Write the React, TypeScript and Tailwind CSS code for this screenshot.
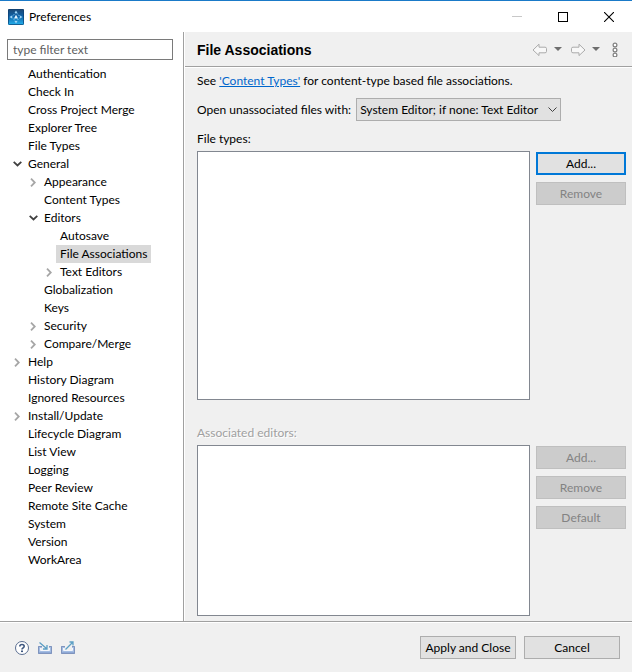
import { useState } from "react";
import type { ReactNode } from "react";
import clsx from "clsx";

type PageNode = {
  title: string;
  open?: boolean;
  children?: PageNode[];
};

const pages: PageNode[] = [
  { title: "Authentication" },
  { title: "Check In" },
  { title: "Cross Project Merge" },
  { title: "Explorer Tree" },
  { title: "File Types" },
  {
    title: "General",
    open: true,
    children: [
      { title: "Appearance", children: [] },
      { title: "Content Types" },
      {
        title: "Editors",
        open: true,
        children: [
          { title: "Autosave" },
          { title: "File Associations" },
          { title: "Text Editors", children: [] },
        ],
      },
      { title: "Globalization" },
      { title: "Keys" },
      { title: "Security", children: [] },
      { title: "Compare/Merge", children: [] },
    ],
  },
  { title: "Help", children: [] },
  { title: "History Diagram" },
  { title: "Ignored Resources" },
  { title: "Install/Update", children: [] },
  { title: "Lifecycle Diagram" },
  { title: "List View" },
  { title: "Logging" },
  { title: "Peer Review" },
  { title: "Remote Site Cache" },
  { title: "System" },
  { title: "Version" },
  { title: "WorkArea" },
];

const AppIcon = () => (
  <svg width="16" height="16" viewBox="0 0 16 16" aria-hidden="true">
    <defs>
      <linearGradient id="app-bg" x1="0" y1="0" x2="0" y2="1">
        <stop offset="0" stopColor="#1d4672" />
        <stop offset="0.45" stopColor="#0f62a8" />
        <stop offset="1" stopColor="#25b4f0" />
      </linearGradient>
    </defs>
    <rect width="16" height="16" rx="1" fill="url(#app-bg)" />
    <rect x="0.5" y="0.5" width="15" height="15" rx="1" fill="none" stroke="#0d3f70" strokeOpacity="0.7" />
    <path d="M8 3.5 12.5 8 8 12.5 3.5 8Z" fill="none" stroke="#7fc4f2" strokeDasharray="2 1" />
    <path d="M8 1.5 9.5 4h-3ZM8 14.5 6.5 12h3ZM1.5 8 4 6.5v3ZM14.5 8 12 9.5v-3Z" fill="#9fd6f8" />
    <path d="M8 5.8 10 9.5H6Z" fill="#e8f6ff" />
  </svg>
);

const Chevron = ({ open }: { open?: boolean }) =>
  open ? (
    <svg width="9" height="6" viewBox="0 0 9 6" fill="none" stroke="#404040" strokeWidth="1.8">
      <path d="M0.7 0.8 4.5 4.4 8.3 0.8" />
    </svg>
  ) : (
    <svg width="6" height="10" viewBox="0 0 6 10" fill="none" stroke="#a6a6a6" strokeWidth="1.8">
      <path d="M1 1.7 4.8 5.5 1 9.3" />
    </svg>
  );

const Arrow = ({ flip }: { flip?: boolean }) => (
  <svg width="16" height="14" viewBox="0 0 16 14" className={clsx(flip && "-scale-x-100")}>
    <path
      d="M1 8 7 2.2V5.2H13Q14.5 5.2 14.5 6.6V9.4Q14.5 10.8 13 10.8H7V13.6Z"
      fill="#f8f8f8"
      stroke="#ababab"
      strokeLinejoin="round"
    />
  </svg>
);

const Triangle = () => (
  <svg width="8" height="4" viewBox="0 0 8 4">
    <path d="M0 0H8L4 4Z" fill="#6e6e6e" />
  </svg>
);

const HelpIcon = () => (
  <svg width="16" height="16" viewBox="0 0 16 16" fill="none">
    <circle cx="8" cy="8" r="6.5" fill="#fff" stroke="#5a6e91" />
    <path d="M5.8 6.4Q5.8 4.5 8 4.5T10.2 6.3Q10.2 7.3 9 8 8 8.5 8 9.6" stroke="#3f5880" strokeWidth="1.6" />
    <rect x="7" y="10.5" width="2" height="1.6" fill="#3f5880" />
  </svg>
);

const TrayIcon = ({ out }: { out?: boolean }) => (
  <svg width="16" height="16" viewBox="0 0 16 16" fill="none">
    <path d="M1 6H5V8H3V10H13V8H12V6H15V14H1Z" fill="#a3bce2" />
    <path d="M5 6.5H1.5V13.5H14.5V6.5H12" stroke="#8094bd" />
    <path d="M2 12.5H14" stroke="#8fa9d6" />
    <path d="M3.5 8V10.5H12.5V8" stroke="#f4f7fc" />
    {out ? (
      <path d="M5.5 9.5 12.5 2.5M9.5 2H13V5.5" stroke="#5c9fc4" strokeWidth="1.3" />
    ) : (
      <path d="M2.5 2.5 9.5 8.5M10 5V9H6" stroke="#5c9fc4" strokeWidth="1.3" />
    )}
  </svg>
);

type ButtonProps = {
  children: ReactNode;
  disabled?: boolean;
  focused?: boolean;
  className?: string;
};

const Button = ({ children, disabled, focused, className }: ButtonProps) => (
  <button
    type="button"
    disabled={disabled}
    className={clsx(
      "flex h-[23px] shrink-0 items-center justify-center whitespace-nowrap",
      focused ? "border-2 border-[#0078d7]" : "border",
      disabled
        ? "border-[#bfbfbf] bg-[#cccccc] text-[#838383]"
        : "bg-[#e1e1e1]",
      !disabled && !focused && "border-[#adadad]",
      className,
    )}
  >
    {children}
  </button>
);

type TreeProps = {
  nodes: PageNode[];
  selected: string;
  onSelect: (title: string) => void;
  nested?: boolean;
};

const Tree = ({ nodes, selected, onSelect, nested }: TreeProps) => (
  <ul role={nested ? "group" : "tree"} className={clsx(nested && "pl-4")}>
    {nodes.map((node) => (
      <li
        key={node.title}
        role="treeitem"
        aria-selected={node.title === selected}
        aria-expanded={node.children ? !!node.open : undefined}
      >
        <div className="flex h-[18px] items-center">
          <span className="flex w-3.5 shrink-0 justify-center">
            {node.children && <Chevron open={node.open} />}
          </span>
          <button
            type="button"
            onClick={() => onSelect(node.title)}
            className={clsx(
              "h-full px-1 whitespace-nowrap",
              node.title === selected && "bg-[#d9d9d9]",
            )}
          >
            {node.title}
          </button>
        </div>
        {node.open && node.children && (
          <Tree nodes={node.children} selected={selected} onSelect={onSelect} nested />
        )}
      </li>
    ))}
  </ul>
);

const TitleBar = () => (
  <div className="flex h-8 items-center border-t border-[#1a7ac8] bg-white pl-2">
    <AppIcon />
    <h1 className="ml-[5px] flex-1">Preferences</h1>
    <button type="button" aria-label="Minimize" disabled className="flex h-full w-[46px] items-center justify-center">
      <svg width="11" height="11" viewBox="0 0 11 11" stroke="#c8c8c8">
        <path d="M0 5.5H10" />
      </svg>
    </button>
    <button type="button" aria-label="Maximize" className="flex h-full w-[46px] items-center justify-center">
      <svg width="10" height="10" viewBox="0 0 10 10" fill="none" stroke="#000">
        <rect x="0.5" y="0.5" width="9" height="9" />
      </svg>
    </button>
    <button type="button" aria-label="Close" className="flex h-full w-[46px] items-center justify-center">
      <svg width="10" height="10" viewBox="0 0 10 10" stroke="#000" strokeWidth="1.1">
        <path d="M0 0 10 10M10 0 0 10" />
      </svg>
    </button>
  </div>
);

const PageHeader = ({ title }: { title: string }) => (
  <div className="flex h-[35px] shrink-0 items-center border-b border-[#a0a0a0] pr-3.5 pl-3">
    <h2 className="flex-1 pt-0.5 font-['Liberation_Sans',sans-serif] text-[14px] font-bold">{title}</h2>
    <button type="button" aria-label="Back">
      <Arrow />
    </button>
    <button type="button" aria-label="Back history" className="ml-1.5">
      <Triangle />
    </button>
    <button type="button" aria-label="Forward" className="ml-2">
      <Arrow flip />
    </button>
    <button type="button" aria-label="Forward history" className="ml-1.5">
      <Triangle />
    </button>
    <button type="button" aria-label="Menu" className="ml-3">
      <svg width="6" height="16" viewBox="0 0 6 16" fill="#fff" stroke="#808080" strokeWidth="1.2">
        <circle cx="3" cy="4" r="1.9" />
        <circle cx="3" cy="9" r="1.9" />
        <circle cx="3" cy="14" r="1.9" />
      </svg>
    </button>
  </div>
);

export default function App() {
  const [selected, setSelected] = useState("File Associations");

  return (
    <div className="flex min-h-screen flex-col bg-[#f0f0f0] font-['Lato','Open_Sans',sans-serif] text-[12px] leading-[18px] text-black">
      <TitleBar />

      <div className="flex flex-1 border-b border-[#a0a0a0]">
        <div className="w-[184px] shrink-0 border-r border-[#a0a0a0] bg-white pt-[7px]">
          <input
            type="text"
            aria-label="Filter"
            placeholder="type filter text"
            className="mr-2.5 ml-[7px] block h-[21px] w-[166px] border border-[#7a7a7a] px-[5px] placeholder:text-[#606060]"
          />
          <nav aria-label="Preference pages" className="pt-[5px] pl-2.5">
            <Tree nodes={pages} selected={selected} onSelect={setSelected} />
          </nav>
        </div>

        <main className="flex min-w-0 flex-1 flex-col border-l border-white">
          <PageHeader title="File Associations" />

          <div className="flex flex-1 flex-col border-t border-white pr-1.5 pb-[5px] pl-3">
            <p className="mt-1">
              See{" "}
              <a href="#content-types" className="text-[#0066cc] underline">
                'Content Types'
              </a>{" "}
              for content-type based file associations.
            </p>

            <div className="mt-2 flex items-center gap-[5px]">
              <label htmlFor="opener">Open unassociated files with:</label>
              <div className="relative">
                <select
                  id="opener"
                  className="block h-[23px] w-[205px] appearance-none border border-[#adadad] bg-[#e1e1e1] pr-4 pl-[3px]"
                >
                  <option>System Editor; if none: Text Editor</option>
                </select>
                <svg
                  width="9"
                  height="6"
                  viewBox="0 0 9 6"
                  fill="none"
                  stroke="#404040"
                  className="pointer-events-none absolute top-[9px] right-1"
                >
                  <path d="M0.5 0.5 4.5 4.5 8.5 0.5" />
                </svg>
              </div>
            </div>

            <h3 id="types-label" className="mt-[9px]">
              File types:
            </h3>
            <div className="mt-[3px] flex gap-1.5">
              <div role="listbox" aria-labelledby="types-label" className="h-[249px] flex-1 border border-[#828790] bg-white" />
              <div className="flex w-[90px] flex-col gap-[7px] pt-px">
                <Button focused>Add...</Button>
                <Button disabled>Remove</Button>
              </div>
            </div>

            <h3 id="editors-label" className="mt-6 text-[#a0a0a0] text-shadow-[1px_1px_0_#fff]">
              Associated editors:
            </h3>
            <div className="mt-[3px] flex flex-1 gap-1.5">
              <div role="listbox" aria-labelledby="editors-label" className="min-h-24 flex-1 border border-[#828790] bg-white" />
              <div className="flex w-[90px] flex-col gap-[7px] pt-px">
                <Button disabled>Add...</Button>
                <Button disabled>Remove</Button>
                <Button disabled>Default</Button>
              </div>
            </div>
          </div>
        </main>
      </div>

      <footer className="flex h-[50px] shrink-0 items-center gap-2 border-t border-white pr-3 pl-3.5">
        <div className="flex flex-1 gap-[7px]">
          <button type="button" aria-label="Help">
            <HelpIcon />
          </button>
          <button type="button" aria-label="Import preferences">
            <TrayIcon />
          </button>
          <button type="button" aria-label="Export preferences">
            <TrayIcon out />
          </button>
        </div>
        <Button className="w-24">Apply and Close</Button>
        <Button className="w-24">Cancel</Button>
      </footer>
    </div>
  );
}
